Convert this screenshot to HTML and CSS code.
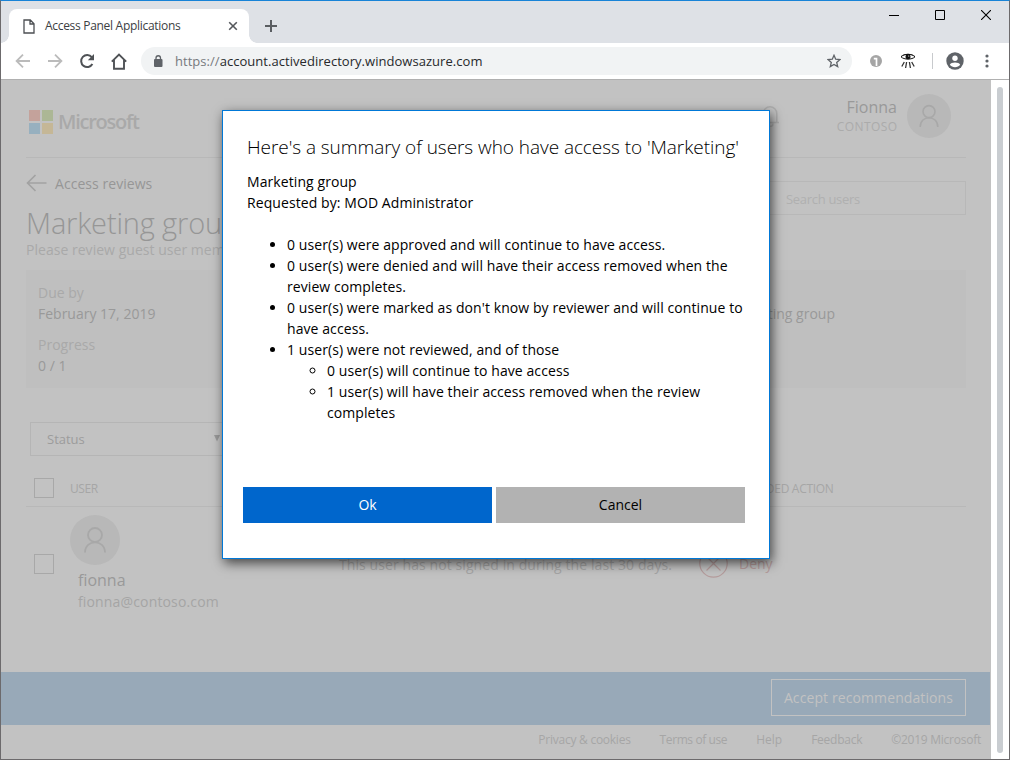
FILE: index.html
```html
<!DOCTYPE html>
<html lang="en">
<head>
<meta charset="utf-8">
<title>Access Panel Applications</title>
<link rel="stylesheet" href="styles.css">
</head>
<body>
<div class="window">
  <header class="tabstrip">
    <div class="tab">
      <svg class="doc" width="12" height="15" viewBox="0 0 12 15"><path d="M1 1h6.3L11 4.7V14H1zM7 1v4h4" fill="none" stroke="#4c4f53" stroke-width="1.3"/></svg>
      <span class="tab-title">Access Panel Applications</span>
      <svg width="10" height="10" viewBox="0 0 10 10"><path d="M1.2 1.2l7.6 7.6M8.8 1.2L1.2 8.8" stroke="#55585c" stroke-width="1.6"/></svg>
    </div>
    <svg class="plus" width="12" height="12" viewBox="0 0 12 12"><path d="M6 0v12M0 6h12" stroke="#5a5d61" stroke-width="2"/></svg>
    <div class="controls">
      <svg width="10" height="10" viewBox="0 0 10 10"><path d="M0 5.5h10" stroke="#000"/></svg>
      <svg width="10" height="10" viewBox="0 0 10 10"><path d="M.5.5h9v9h-9z" stroke="#000" fill="none"/></svg>
      <svg width="10" height="10" viewBox="0 0 10 10"><path d="M0 0l10 10M10 0L0 10" stroke="#000" stroke-width="1.1"/></svg>
    </div>
  </header>
  <nav class="toolbar">
    <svg width="16" height="16" viewBox="0 0 16 16"><path d="M15 8H2M8 1.6L1.6 8 8 14.4" fill="none" stroke="#bbb" stroke-width="1.8"/></svg>
    <svg width="16" height="16" viewBox="0 0 16 16"><path d="M1 8h13M8 1.6L14.4 8 8 14.4" fill="none" stroke="#bbb" stroke-width="1.8"/></svg>
    <svg width="16" height="16" viewBox="0 0 16 16"><path d="M13.4 11a6 6 0 1 1-.6-6.8" fill="none" stroke="#4f5256" stroke-width="2"/><path d="M15 1v6.2H8.8z" fill="#4f5256"/></svg>
    <svg width="16" height="17" viewBox="0 0 16 17"><path d="M.8 8.6L8 1.6l7.2 7M3 7v8.8h10V7" fill="none" stroke="#4f5256" stroke-width="1.9"/></svg>
    <div class="address">
      <svg width="10" height="12" viewBox="0 0 10 12"><rect x="1" y="4" width="8.5" height="8" rx="1" fill="#5f6368"/><path d="M3 5V3a2.2 2.2 0 0 1 4.5 0v2" fill="none" stroke="#5f6368" stroke-width="1.3"/></svg>
      <span class="url"><i>https://</i>account.activedirectory.windowsazure.com</span>
      <svg class="star" width="14" height="14" viewBox="0 0 14 14"><path d="M7 1.3l1.7 3.9 4.2.4-3.2 2.8 1 4.2L7 10.4l-3.7 2.2 1-4.2L1.1 5.6l4.2-.4z" fill="none" stroke="#5f6368" stroke-width="1.3"/></svg>
    </div>
    <svg class="one" width="12" height="12" viewBox="0 0 12 12"><circle cx="6" cy="6" r="6" fill="#a5a5a5"/><path d="M3.8 3.6h2.700V11" fill="none" stroke="#fff" stroke-width="1.7"/></svg>
    <svg class="eye" width="16" height="16" viewBox="0 0 16 16"><path d="M1 3.800C4 .6 12 .6 15 3.800 12 6.900 4 6.900 1 3.800z" fill="#fff" stroke="#111" stroke-width="1"/><path d="M.8 3.200C4-.2 12-.2 15.200 3.200 11 1.400 5 1.400 .8 3.200z" fill="#111"/><circle cx="8" cy="3.700" r="2.500" fill="#111"/><circle cx="8.700" cy="3" r=".6" fill="#fff"/><path d="M4.300 9L1.800 13.500M6.600 9l-1 6M9.400 9l1 6M11.700 9l2.500 4.500" stroke="#333" stroke-width="1.300"/></svg>
    <span class="divider"></span>
    <svg class="profile" width="18" height="18" viewBox="0 0 18 18"><circle cx="9" cy="9" r="8.7" fill="#5f6368"/><circle cx="9" cy="6.3" r="2.7" fill="#fff"/><path d="M3.8 12.8C5 9.8 13 9.8 14.2 12.8 12 16 6 16 3.8 12.8z" fill="#fff"/></svg>
    <svg class="dots" width="4" height="14" viewBox="0 0 4 14"><circle cx="2" cy="2" r="1.6" fill="#5f6368"/><circle cx="2" cy="7" r="1.6" fill="#5f6368"/><circle cx="2" cy="12" r="1.6" fill="#5f6368"/></svg>
  </nav>
  <div class="viewport">
    <main class="page">
      <header class="masthead">
        <div class="brand"><span class="squares"><b class="sq red"></b><b class="sq green"></b><b class="sq blue"></b><b class="sq yellow"></b></span><span class="wordmark">Microsoft</span></div>
        <svg class="bell" width="20" height="22" viewBox="0 0 20 22"><path d="M1 17.5h18M3.2 17V8.5a6.8 6.8 0 0 1 13.6 0V17M7 18.5a3 3 0 0 0 6 0" fill="none" stroke="#adadad" stroke-width="1.5"/></svg>
        <div class="who"><span class="who-name">Fionna</span><span class="who-org">CONTOSO</span></div>
        <div class="avatar small"><svg width="20" height="24" viewBox="0 0 20 24"><circle cx="10" cy="7.6" r="6" fill="none" stroke="#a8a8a8" stroke-width="1.6"/><path d="M1.2 23c0-12.400 17.600-12.400 17.600 0" fill="none" stroke="#a8a8a8" stroke-width="1.6"/></svg></div>
      </header>
      <section class="intro">
        <div class="heading">
          <div class="back"><svg width="21" height="18" viewBox="0 0 21 18"><path d="M20.500 9H1.500M9.500 1L1.500 9l8 8" fill="none" stroke="#a2a2a2" stroke-width="1.6"/></svg><span class="back-text">Access reviews</span></div>
          <h1 class="title">Marketing group</h1>
          <p class="subtitle">Please review guest user membership</p>
        </div>
        <div class="search">Search users</div>
      </section>
      <section class="panel">
        <div class="facts"><span class="label">Due by</span><span class="value">February 17, 2019</span><span class="label second">Progress</span><span class="value">0 / 1</span></div>
        <div class="group">Marketing group</div>
      </section>
      <div class="status"><span class="status-text">Status</span><svg width="6" height="7" viewBox="0 0 6 7"><path d="M0 0h6L3 6.500z" fill="#999"/></svg></div>
      <div class="thead"><span class="check"></span><span class="col-user">USER</span><span class="col-action">RECOMMENDED ACTION</span></div>
      <div class="row">
        <span class="check"></span>
        <div class="person"><div class="avatar"><svg width="22" height="26" viewBox="0 0 22 26"><circle cx="11" cy="8" r="7" fill="none" stroke="#a8a8a8" stroke-width="1.8"/><path d="M1 25.500c0-13.600 20-13.600 20 0" fill="none" stroke="#a8a8a8" stroke-width="1.8"/></svg></div><span class="person-name">fionna</span><span class="person-mail">fionna@contoso.com</span></div>
        <span class="reason">This user has not signed in during the last 30 days.</span>
        <span class="verdict"><svg width="29" height="29" viewBox="0 0 29 29"><g fill="none" stroke="#b59c9c" stroke-width="1.2"><circle cx="14.500" cy="14.500" r="13.700"/><path d="M7.500 7.500l14 14M21.500 7.500l-14 14"/></g></svg><span class="deny">Deny</span></span>
      </div>
      <div class="actionbar"><button class="accept"><span class="accept-text">Accept recommendations</span></button></div>
      <footer class="footer"><span class="f1">Privacy &amp; cookies</span><span class="f2">Terms of use</span><span class="f3">Help</span><span class="f4">Feedback</span><span class="f5">©2019 Microsoft</span></footer>
    </main>
    <div class="scroll"><div class="thumb"></div></div>
  </div>
  <section class="dialog">
    <h2 class="dialog-title">Here's a summary of users who have access to 'Marketing'</h2>
    <p class="meta">Marketing group<br>Requested by: MOD Administrator</p>
    <ul class="summary">
      <li>0 user(s) were approved and will continue to have access.</li>
      <li>0 user(s) were denied and will have their access removed when the<br>review completes.</li>
      <li>0 user(s) were marked as don't know by reviewer and will continue to<br>have access.</li>
      <li>1 user(s) were not reviewed, and of those
        <ul class="sub"><li>0 user(s) will continue to have access</li><li>1 user(s) will have their access removed when the review<br>completes</li></ul>
      </li>
    </ul>
    <div class="buttons"><button class="btn ok">Ok</button><button class="btn cancel">Cancel</button></div>
  </section>
</div>
</body>
</html>
```
FILE: styles.css
```css
* { box-sizing: border-box; }
body { margin: 0; font-family: "Open Sans", "Noto Sans", sans-serif; font-size: 14px; color: #000; }
h1, h2, p, ul { margin: 0; font-weight: 400; }
button { font: inherit; padding: 0; border: 0; border-radius: 0; }
svg { display: block; flex: none; }
span { white-space: nowrap; }
.window { position: relative; width: 1010px; height: 760px; border: 1px solid #6c6a6c; border-top-color: #1883d7; background: #fff; display: flex; flex-direction: column; overflow: hidden; }

.tabstrip { height: 42px; flex: none; background: #dee1e6; display: flex; padding: 8px 18px 0 8px; }
.tab { position: relative; width: 240px; height: 34px; background: #fff; border-radius: 8px 8px 0 0; display: flex; align-items: center; padding: 0 11px 0 14px; }
.tab::before, .tab::after { content: ""; position: absolute; bottom: 0; width: 8px; height: 8px; }
.tab::before { left: -8px; background: radial-gradient(circle at 0 0, #dee1e6 7.5px, #fff 8px); }
.tab::after { right: -8px; background: radial-gradient(circle at 100% 0, #dee1e6 7.5px, #fff 8px); }
.tab-title { flex: 1; margin: -1px 0 0 10px; font-size: 12px; letter-spacing: -.3px; color: #3c4043; }
.plus { margin: 11px 0 0 16px; }
.controls { margin-left: auto; display: flex; gap: 36px; padding-top: 1px; }

.toolbar { height: 37px; flex: none; display: flex; align-items: center; padding-left: 14px; border-bottom: 1px solid #b0b0b0; }
.toolbar > svg + svg { margin-left: 16px; }
.address { width: 711px; height: 28px; margin-left: 14px; border-radius: 14px; background: #f1f3f4; display: flex; align-items: center; padding: 0 11px 0 12px; }
.url { margin-left: 12px; font-size: 13px; letter-spacing: .04px; color: #27292c; }
.url i { font-style: normal; color: #777a7e; }
.star { margin-left: auto; }
.toolbar .one { margin-left: 18px; }
.toolbar .eye { margin-left: 18px; }
.divider { width: 1px; height: 16px; background: #c8cacd; margin-left: 16px; }
.toolbar .profile { margin-left: 13px; }
.toolbar .dots { margin-left: 21px; }

.viewport { flex: 1; display: flex; min-height: 0; }
.page { width: 990px; background: #c2c2c2; display: flex; flex-direction: column; color: #9c9c9c; }
.scroll { flex: 1; padding: 7px 6px 6px; background: #fff; display: flex; }
.thumb { width: 6px; border-radius: 3px; background: #c9cdd1; }

.masthead { height: 78px; margin: 0 25px; padding-right: 15px; border-bottom: 1px solid #b8b8b8; display: flex; align-items: flex-start; }
.brand { display: flex; align-items: center; padding: 30px 0 0 3px; width: 734px; }
.squares { display: grid; grid-template-columns: 11px 11px; gap: 2px; }
.sq { height: 11px; }
.red { background: #c4a29b; } .green { background: #acb795; } .blue { background: #97b0bf; } .yellow { background: #c5b796; }
.wordmark { margin-left: 5px; font-size: 20px; line-height: 24px; font-weight: 600; letter-spacing: -1.25px; color: #a9a9a9; }
.bell { margin-top: 25px; }
.who { margin-left: auto; margin-right: 10px; padding-top: 16px; display: flex; flex-direction: column; align-items: flex-end; }
.who-name { font-size: 16px; line-height: 22px; color: #999; }
.who-org { font-size: 12px; line-height: 17px; letter-spacing: .4px; margin-right: -.4px; color: #ababab; }
.avatar { width: 50px; height: 50px; border-radius: 50%; background: #b8b8b8; display: flex; align-items: center; justify-content: center; }
.avatar.small { width: 44px; height: 44px; margin-top: 14px; }

.intro { height: 112px; margin: 0 25px; display: flex; justify-content: space-between; }
.back { height: 20px; margin-top: 15px; display: flex; align-items: center; }
.back-text { margin-left: 8px; letter-spacing: .05px; color: #969696; }
.title { margin-top: 8px; font-size: 29px; line-height: 44px; font-weight: 300; color: #969696; letter-spacing: -.15px; white-space: nowrap; }
.subtitle { margin-top: -6px; line-height: 21px; letter-spacing: .03px; color: #a9a9a9; white-space: nowrap; }
.search { width: 214px; height: 34px; margin-top: 23px; border: 1px solid #b8b8b8; padding-left: 33px; line-height: 34px; font-size: 13px; letter-spacing: -.3px; color: #b0b0b0; }

.panel { height: 118px; flex: none; margin: 0 25px; padding: 12px 131px 0 12px; background: #bfbfbf; display: flex; justify-content: space-between; line-height: 21px; }
.facts { display: flex; flex-direction: column; }
.label { color: #a9a9a9; }
.second { margin-top: 10px; }
.value, .group { color: #999; }
.group { padding-top: 21px; }

.status { width: 215px; height: 34px; margin: 34px 0 0 29px; border: 1px solid #b5b5b5; display: flex; align-items: center; padding: 0 24px 0 16px; justify-content: space-between; font-size: 13px; }
.status svg { margin-top: -2px; }
.thead { height: 51px; margin: 0 25px; padding: 14px 0 0 8px; display: flex; align-items: center; font-size: 12px; border-bottom: 1px solid #b8b8b8; color: #a6a6a6; }
.check { width: 20px; height: 20px; border: 1px solid #a8a8a8; }
.col-user { margin-left: 16px; width: 630px; letter-spacing: -.4px; }
.col-action { letter-spacing: -.3px; }
.row { height: 165px; flex: none; margin: 0 25px 0 33px; display: flex; align-items: flex-start; }
.row .check { margin-top: 47px; }
.person { margin: 8px 0 0 16px; width: 269px; display: flex; flex-direction: column; }
.person-name { margin: 4px 0 0 8px; font-size: 16px; line-height: 22px; color: #999; }
.person-mail { margin-left: 8px; line-height: 22px; letter-spacing: .15px; color: #a5a5a5; }
.reason { margin-top: 48px; width: 360px; line-height: 20px; letter-spacing: .09px; color: #a5a5a5; }
.verdict { display: flex; align-items: center; margin-top: 42px; }
.deny { margin-left: 11px; color: #b59c9c; }
.actionbar { height: 53px; flex: none; margin-right: 1px; background: #98a9b8; padding: 7px 24px 0 0; display: flex; justify-content: flex-end; }
.accept { width: 195px; height: 37px; border: 1px solid #c2c2c2; background: none; color: #c2c2c2; letter-spacing: .1px; }
.footer { flex: 1; display: flex; justify-content: flex-end; align-items: center; padding: 0 10px 6px 0; gap: 29px; font-size: 12px; letter-spacing: -.25px; color: #a6a6a6; }
.f2 { letter-spacing: -.4px; }
.f3 { letter-spacing: 0; }

.dialog { position: absolute; left: 221px; top: 109px; width: 548px; height: 449px; background: #fff; border: 1px solid #0078d7; box-shadow: 2px 4px 11px rgba(0,0,0,.65); padding: 23px 24px 0; line-height: 21px; letter-spacing: .08px; white-space: nowrap; }
.dialog-title { font-size: 19px; line-height: 26px; font-weight: 300; letter-spacing: -.06px; }
.meta { margin-top: 11px; }
.summary { margin-top: 21px; padding-left: 40px; }
.sub { padding-left: 40px; }
.buttons { display: flex; gap: 4px; margin: 64px 0 0 -4px; }
.btn { width: 249px; height: 36px; padding-bottom: 2px; }
.ok { background: #06c; color: #fff; }
.cancel { background: #b2b2b2; color: #000; }
```
